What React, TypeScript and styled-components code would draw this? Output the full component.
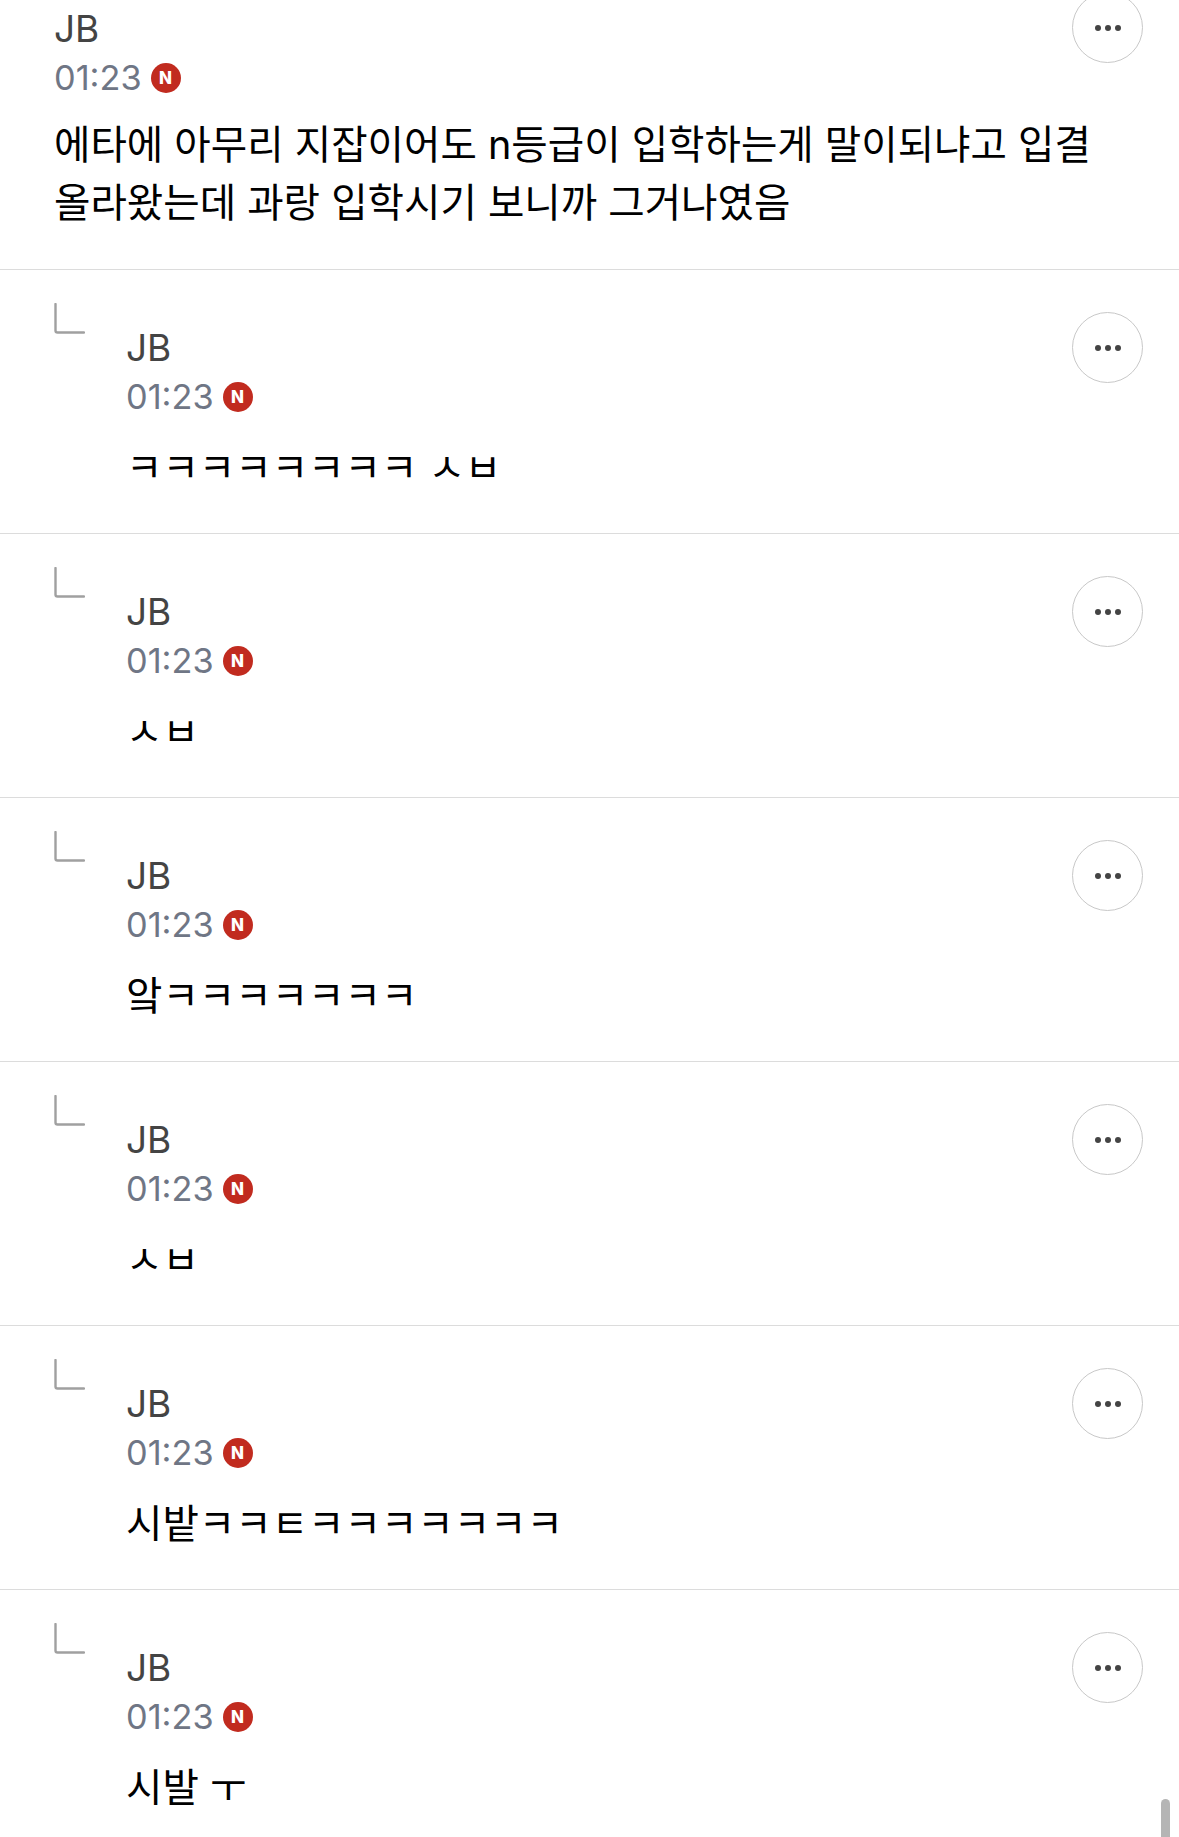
import styled, { createGlobalStyle } from "styled-components";

const comments = [
  "ㅋㅋㅋㅋㅋㅋㅋㅋ ㅅㅂ",
  "ㅅㅂ",
  "앜ㅋㅋㅋㅋㅋㅋㅋ",
  "ㅅㅂ",
  "시밭ㅋㅋㅌㅋㅋㅋㅋㅋㅋㅋ",
  "시발 ㅜ",
];

const Meta = () => (
  <>
    <Name>JB</Name>
    <MetaRow>
      <Time>01:23</Time>
      <NewBadge>N</NewBadge>
    </MetaRow>
  </>
);

const MoreButton = () => (
  <More aria-label="more">
    <Dot />
    <Dot />
    <Dot />
  </More>
);

const App = () => (
  <>
    <GlobalStyle />
    <Page>
      <Post>
        <Body $top={14}>
          <Meta />
          <PostText>
            에타에 아무리 지잡이어도 n등급이 입학하는게 말이되냐고 입결
            <br />
            올라왔는데 과랑 입학시기 보니까 그거나였음
          </PostText>
        </Body>
        <MoreButton />
      </Post>
      {comments.map((text, i) => (
        <Reply key={i}>
          <ReplyIcon width="31" height="31" viewBox="0 0 31 31">
            <path d="M1.5 1v26.5a2 2 0 0 0 2 2H30" fill="none" stroke="#a0a0a0" strokeWidth="2.4" strokeLinecap="round" />
          </ReplyIcon>
          <Body $top={22}>
            <Meta />
            <ReplyText>{text}</ReplyText>
          </Body>
          <MoreButton />
        </Reply>
      ))}
      <ScrollThumb />
    </Page>
  </>
);

const GlobalStyle = createGlobalStyle`
  html, body {
    margin: 0;
    background: #fff;
    overflow: hidden;
  }
  body {
    font-family: Inter, "Noto Sans CJK KR", sans-serif;
  }
`;

const Page = styled.div`
  position: relative;
  width: 1179px;
  height: 1837px;
  overflow: hidden;
`;

const Post = styled.div`
  display: flex;
  box-sizing: border-box;
  height: 321px;
  margin-top: -51px;
  padding: 43px 36px 0 54px;
  border-bottom: 1px solid #dcdcdc;
`;

const Reply = styled.div`
  display: flex;
  box-sizing: border-box;
  height: 264px;
  padding: 33px 36px 0 54px;
  border-bottom: 1px solid #dcdcdc;
`;

const ReplyIcon = styled.svg`
  flex: none;
  margin-right: 41px;
`;

const Body = styled.div<{ $top: number }>`
  flex: 1;
  min-width: 0;
  padding-top: ${(p) => p.$top}px;
`;

const Name = styled.div`
  font-size: 37px;
  line-height: 46px;
  color: #444;
`;

const MetaRow = styled.div`
  display: flex;
  align-items: center;
  gap: 9px;
  margin-top: 3px;
`;

const Time = styled.span`
  font-size: 34.3px;
  line-height: 46px;
  color: #6f7685;
`;

const NewBadge = styled.span`
  display: flex;
  align-items: center;
  justify-content: center;
  width: 30px;
  height: 30px;
  border-radius: 50%;
  background: #c12b1f;
  color: #fff;
  font-size: 17px;
  font-weight: 800;
`;

const PostText = styled.div`
  margin-top: 15px;
  font-size: 39.6px;
  line-height: 58px;
  color: #000;
  white-space: nowrap;
`;

const ReplyText = styled.div`
  margin-top: 19px;
  font-size: 39.6px;
  line-height: 58px;
  color: #000;
  white-space: nowrap;
`;

const More = styled.button`
  flex: none;
  display: flex;
  align-items: center;
  justify-content: center;
  gap: 4px;
  box-sizing: border-box;
  width: 71px;
  height: 71px;
  margin-top: 9px;
  padding: 0;
  border: 1.5px solid #c8c8c8;
  border-radius: 50%;
  background: #fff;

  ${Post} & {
    margin-top: 0;
  }
`;

const Dot = styled.span`
  width: 6px;
  height: 6px;
  border-radius: 50%;
  background: #444;
`;

const ScrollThumb = styled.div`
  position: absolute;
  top: 1799px;
  left: 1161px;
  width: 9px;
  height: 60px;
  border-radius: 5px;
  background: #b5b5b5;
`;

export default App;
